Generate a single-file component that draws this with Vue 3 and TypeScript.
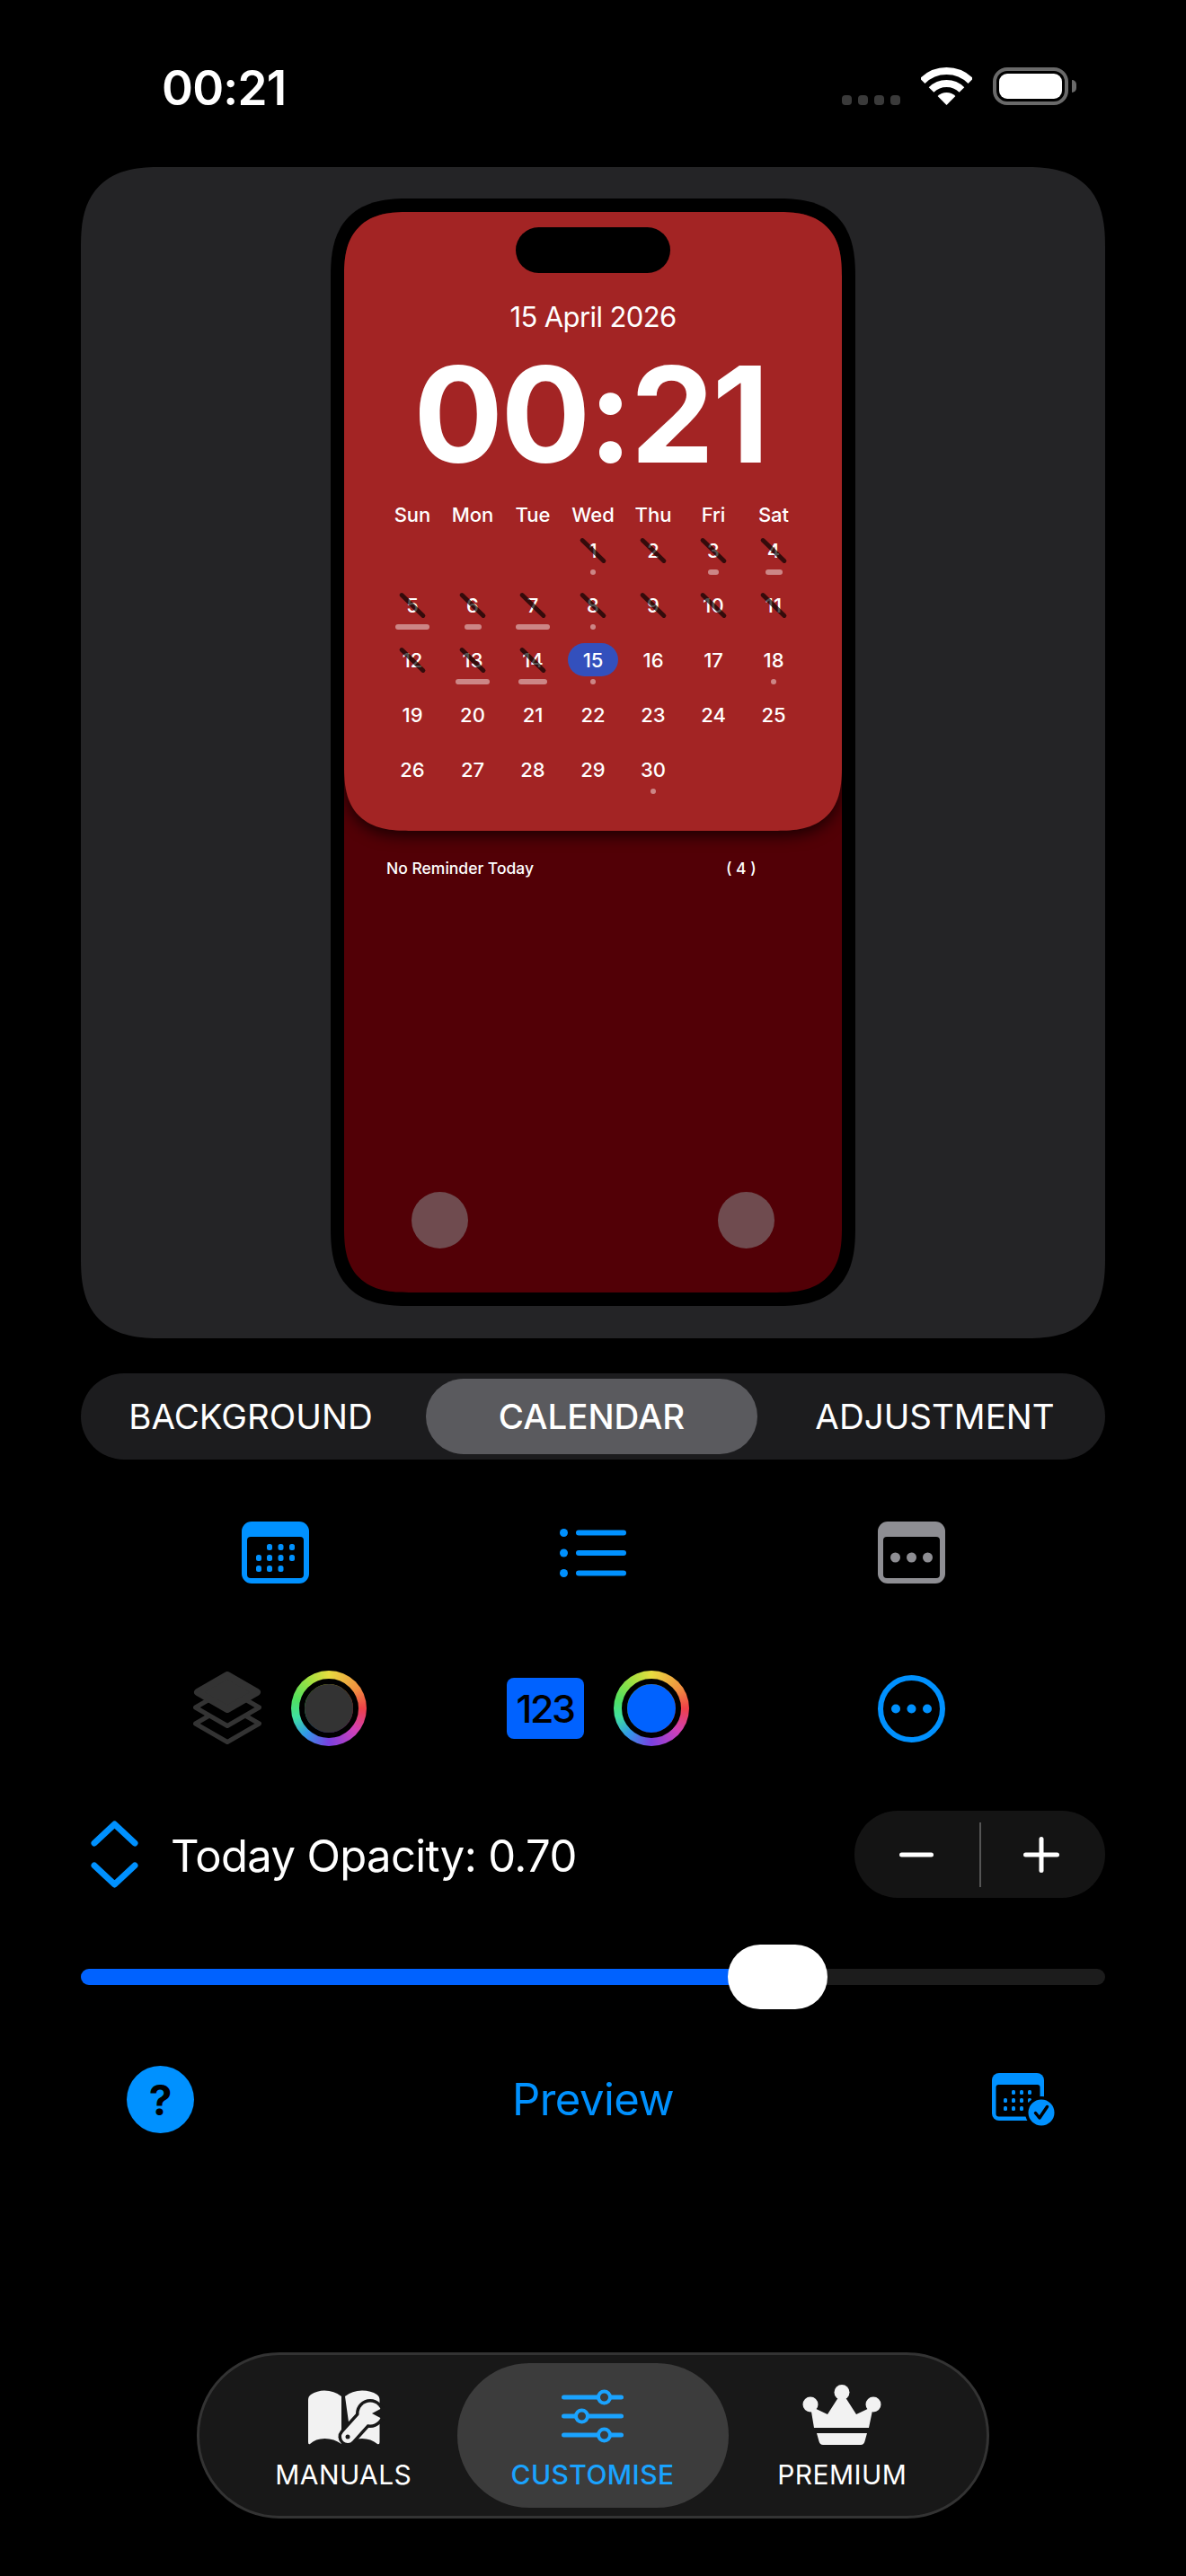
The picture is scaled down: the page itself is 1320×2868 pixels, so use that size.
<script setup lang="ts">
interface DayCell {
  day: number | null
  crossed?: boolean
  bar?: number
  today?: boolean
}

const weekdays = ['Sun', 'Mon', 'Tue', 'Wed', 'Thu', 'Fri', 'Sat']

// bar width per day, 6.5 reads as a dot
const bars: Record<number, number> = {
  1: 6.5, 3: 12, 4: 19, 5: 38, 6: 19, 7: 38, 8: 6.5,
  13: 38, 14: 32, 15: 6.5, 18: 6.5, 30: 6.5
}

const cells: DayCell[] = [
  { day: null }, { day: null }, { day: null },
  ...Array.from({ length: 30 }, (_, i) => ({
    day: i + 1,
    crossed: i + 1 < 15,
    today: i + 1 === 15,
    bar: bars[i + 1]
  }))
]

const opacity = 0.7
const trackWidth = 1140
const thumbWidth = 111
const thumbLeft = opacity * (trackWidth - thumbWidth)
const fillWidth = thumbLeft + thumbWidth / 2
</script>

<template>
  <div class="page">
    <!-- status bar -->
    <header class="status">
      <span class="status-time">00:21</span>
      <div class="status-right">
        <div class="signal"><i></i><i></i><i></i><i></i></div>
        <svg class="wifi" width="57" height="42" viewBox="0 0 57 42">
          <path d="M1.63 15.13A38 38 0 0 1 55.37 15.13" fill="none" stroke="#fff" stroke-width="8" />
          <path d="M11.53 25.03A24 24 0 0 1 45.47 25.03" fill="none" stroke="#fff" stroke-width="8" />
          <path d="M28.5 42L18.6 32.1A14 14 0 0 1 38.4 32.1Z" fill="#fff" />
        </svg>
        <div class="battery">
          <div class="battery-body"><div class="battery-level"></div></div>
          <div class="battery-nub"></div>
        </div>
      </div>
    </header>

    <!-- phone preview -->
    <section class="card">
      <div class="phone">
        <div class="screen">
          <div class="lock-panel">
            <div class="island"></div>
            <div class="date">15 April 2026</div>
            <div class="clock">00:21</div>
            <div class="week">
              <span v-for="d in weekdays" :key="d">{{ d }}</span>
            </div>
            <div class="days">
              <div v-for="(c, i) in cells" :key="i" class="cell">
                <template v-if="c.day">
                  <span class="num" :class="{ crossed: c.crossed, today: c.today }">{{ c.day }}</span>
                  <span v-if="c.bar" class="bar" :style="{ width: c.bar + 'px' }"></span>
                </template>
              </div>
            </div>
          </div>
          <div class="reminder">
            <span>No Reminder Today</span>
            <span>( 4 )</span>
          </div>
          <div class="lock-buttons">
            <div class="lock-btn"></div>
            <div class="lock-btn"></div>
          </div>
        </div>
      </div>
    </section>

    <!-- segment -->
    <nav class="segment">
      <div class="seg seg-left">BACKGROUND</div>
      <div class="seg seg-active">CALENDAR</div>
      <div class="seg seg-right">ADJUSTMENT</div>
    </nav>

    <!-- style row -->
    <div class="icon-row row-one">
      <div class="icon-cell">
        <svg width="75" height="69" viewBox="0 0 75 69">
          <rect width="75" height="69" rx="11" fill="#0091ff" />
          <rect x="6" y="17" width="63" height="46" rx="4" fill="#000" />
          <g fill="#0091ff">
            <rect x="28" y="25" width="6" height="7" rx="2.5" />
            <rect x="40.5" y="25" width="6" height="7" rx="2.5" />
            <rect x="53" y="25" width="6" height="7" rx="2.5" />
            <rect x="16" y="37" width="6" height="7" rx="2.5" />
            <rect x="28" y="37" width="6" height="7" rx="2.5" />
            <rect x="40.5" y="37" width="6" height="7" rx="2.5" />
            <rect x="53" y="37" width="6" height="7" rx="2.5" />
            <rect x="16" y="49" width="6" height="7" rx="2.5" />
            <rect x="28" y="49" width="6" height="7" rx="2.5" />
            <rect x="40.5" y="49" width="6" height="7" rx="2.5" />
          </g>
        </svg>
      </div>
      <div class="icon-cell">
        <svg width="74" height="54" viewBox="0 0 74 54">
          <g fill="#0091ff">
            <circle cx="4.5" cy="4.5" r="4.5" />
            <circle cx="4.5" cy="27" r="4.5" />
            <circle cx="4.5" cy="49.5" r="4.5" />
            <rect x="18" y="1.5" width="56" height="6" rx="3" />
            <rect x="18" y="24" width="56" height="6" rx="3" />
            <rect x="18" y="46.5" width="56" height="6" rx="3" />
          </g>
        </svg>
      </div>
      <div class="icon-cell">
        <svg width="75" height="69" viewBox="0 0 75 69">
          <rect width="75" height="69" rx="11" fill="#8e8e93" />
          <rect x="6" y="17" width="63" height="46" rx="4" fill="#000" />
          <g fill="#8e8e93">
            <circle cx="19.5" cy="40" r="5.5" />
            <circle cx="37.5" cy="40" r="5.5" />
            <circle cx="55.5" cy="40" r="5.5" />
          </g>
        </svg>
      </div>
    </div>

    <div class="icon-row row-two">
      <div class="icon-cell shifted">
        <svg width="76" height="82" viewBox="0 0 76 82">
          <g stroke-linejoin="round">
            <path d="M38 37.5L73.5 58L38 78.5L2.5 58Z" fill="none" stroke="#333" stroke-width="5" />
            <path d="M38 19.5L73.5 40L38 60.5L2.5 40Z" fill="#000" stroke="#333" stroke-width="5" />
            <path d="M38 4L71 23L38 42L5 23Z" fill="#333" stroke="#333" stroke-width="8" />
          </g>
        </svg>
        <div class="ring"><div class="ring-fill fill-dark"></div></div>
      </div>
      <div class="icon-cell shifted">
        <div class="num-badge">123</div>
        <div class="ring"><div class="ring-fill fill-blue"></div></div>
      </div>
      <div class="icon-cell">
        <svg width="75" height="75" viewBox="0 0 75 75">
          <circle cx="37.5" cy="37.5" r="34.5" fill="none" stroke="#0091ff" stroke-width="6" />
          <g fill="#0091ff">
            <circle cx="20" cy="37.5" r="5" />
            <circle cx="37.5" cy="37.5" r="5" />
            <circle cx="55" cy="37.5" r="5" />
          </g>
        </svg>
      </div>
    </div>

    <!-- opacity -->
    <div class="opacity-row">
      <div class="opacity-label">
        <svg width="53" height="75" viewBox="0 0 53 75">
          <g fill="none" stroke="#0091ff" stroke-width="7" stroke-linecap="round" stroke-linejoin="round">
            <path d="M4 25L26.5 4L49 25" />
            <path d="M4 50L26.5 71L49 50" />
          </g>
        </svg>
        <span class="opacity-text">Today Opacity: 0.70</span>
      </div>
      <div class="stepper">
        <svg width="38" height="40" viewBox="0 0 38 40">
          <rect y="17.5" width="38" height="5" rx="2.5" fill="#fff" />
        </svg>
        <div class="stepper-line"></div>
        <svg width="40" height="40" viewBox="0 0 40 40">
          <rect y="17.5" width="40" height="5" rx="2.5" fill="#fff" />
          <rect x="17.5" width="5" height="40" rx="2.5" fill="#fff" />
        </svg>
      </div>
    </div>

    <div class="slider">
      <div class="track">
        <div class="track-fill" :style="{ width: fillWidth + 'px' }"></div>
      </div>
      <div class="thumb" :style="{ left: thumbLeft + 'px' }"></div>
    </div>

    <!-- actions -->
    <div class="action-row">
      <div class="help">?</div>
      <div class="preview">Preview</div>
      <svg class="check-cal" width="71" height="59" viewBox="0 0 71 59">
        <rect width="58" height="53" rx="8" fill="#0091ff" />
        <rect x="4.5" y="13" width="49" height="35.5" rx="3" fill="#000" />
        <g fill="#0091ff">
          <rect x="22" y="19" width="4" height="5" rx="1.6" />
          <rect x="31" y="19" width="4" height="5" rx="1.6" />
          <rect x="40" y="19" width="4" height="5" rx="1.6" />
          <rect x="13" y="28" width="4" height="5" rx="1.6" />
          <rect x="22" y="28" width="4" height="5" rx="1.6" />
          <rect x="31" y="28" width="4" height="5" rx="1.6" />
          <rect x="40" y="28" width="4" height="5" rx="1.6" />
          <rect x="13" y="37" width="4" height="5" rx="1.6" />
          <rect x="22" y="37" width="4" height="5" rx="1.6" />
          <rect x="31" y="37" width="4" height="5" rx="1.6" />
        </g>
        <circle cx="55" cy="44" r="18" fill="#000" />
        <circle cx="55" cy="44" r="14.5" fill="#0091ff" />
        <path d="M48.5 44.5L53 50L61.5 37.5" fill="none" stroke="#000" stroke-width="3.5" stroke-linecap="round" stroke-linejoin="round" />
      </svg>
    </div>

    <!-- tab bar -->
    <nav class="tabbar">
      <div class="tab tab-left">
        <svg class="book" width="79" height="68" viewBox="0 -5 79 68">
          <path d="M0 12Q0 8 3 6Q10 1.5 18 1.5Q29 1.5 37 8V61Q29 55 18.5 55Q8 55 2 61Q0 62 0 59Z" fill="#f2f2f2" />
          <path d="M41 8Q49 1.5 60 1.5Q70 1.5 76.5 6Q79.5 8 79.5 12V59Q79.5 62 77 61Q70 55 60 55Q53 55 48 58Z" fill="#f2f2f2" />
          <path d="M44 53L62 33" stroke="#181818" stroke-width="21" stroke-linecap="round" />
          <circle cx="69" cy="27" r="16" fill="#181818" />
          <path d="M44 53L62 33" stroke="#f2f2f2" stroke-width="14" stroke-linecap="round" />
          <circle cx="69" cy="27" r="12.5" fill="#f2f2f2" />
          <path d="M71 27L86 19V35Z" fill="#181818" />
          <circle cx="44" cy="53" r="2.5" fill="#181818" />
        </svg>
        <span>MANUALS</span>
      </div>
      <div class="tab tab-active">
        <svg width="69" height="68" viewBox="0 -6 69 68">
          <g fill="#1aa3ff">
            <rect y="5.5" width="69" height="5" rx="2.5" />
            <rect y="26.5" width="69" height="5" rx="2.5" />
            <rect y="47.5" width="69" height="5" rx="2.5" />
          </g>
          <g fill="#3c3c3c" stroke="#1aa3ff" stroke-width="4">
            <circle cx="47.5" cy="8" r="6.5" />
            <circle cx="22.5" cy="29" r="6.5" />
            <circle cx="47.5" cy="50" r="6.5" />
          </g>
        </svg>
        <span>CUSTOMISE</span>
      </div>
      <div class="tab tab-right">
        <svg width="88" height="68" viewBox="0 0 88 68">
          <g fill="#f2f2f2">
            <circle cx="44" cy="8.5" r="8.5" />
            <circle cx="9" cy="22" r="8.5" />
            <circle cx="79" cy="22" r="8.5" />
            <path d="M13 48L9 24L28 33L44 8L60 33L79 24L74 48Z" />
            <path d="M16 54H72L69.5 63Q68.5 67 65 67H23Q19.5 67 18.5 63Z" />
          </g>
        </svg>
        <span>PREMIUM</span>
      </div>
    </nav>
  </div>
</template>

<style>
html,
body {
  margin: 0;
  background: #000;
}
</style>

<style scoped>
.page {
  box-sizing: border-box;
  width: 1320px;
  height: 2868px;
  padding: 75px 90px 0;
  display: flex;
  flex-direction: column;
  background: #000;
  color: #fff;
  font-family: Inter, "Liberation Sans", sans-serif;
  overflow: hidden;
}

/* status bar */
.status {
  display: flex;
  align-items: center;
  justify-content: space-between;
  height: 42px;
  margin: 0 32px 0 92px;
}

.status-time {
  font-size: 53px;
  font-weight: 600;
  line-height: 42px;
  letter-spacing: -0.8px;
  margin-left: -2px;
  padding-top: 4px;
}

.status-right {
  display: flex;
  align-items: flex-end;
}

.signal {
  display: flex;
  gap: 7px;
  margin-right: 23px;
}

.signal i {
  display: block;
  width: 11px;
  height: 11px;
  border-radius: 4px;
  background: #3a3a3a;
}

.wifi {
  display: block;
  margin-right: 23px;
}

.battery {
  display: flex;
  align-items: center;
}

.battery-body {
  box-sizing: border-box;
  width: 84px;
  height: 42px;
  padding: 3px;
  border: 4px solid #6a6a6a;
  border-radius: 16px;
}

.battery-level {
  height: 100%;
  border-radius: 9px;
  background: #fff;
}

.battery-nub {
  width: 5px;
  height: 14px;
  margin-left: 4px;
  border-radius: 0 5px 5px 0;
  background: #6a6a6a;
}

/* preview card */
.card {
  display: flex;
  justify-content: center;
  height: 1304px;
  margin-top: 69px;
  padding-top: 35px;
  box-sizing: border-box;
  border-radius: 76px;
  background: #242426;
}

.phone {
  box-sizing: border-box;
  width: 584px;
  height: 1233px;
  border: 15px solid #000;
  border-radius: 76px;
  background: #000;
}

.screen {
  display: flex;
  flex-direction: column;
  height: 100%;
  border-radius: 62px;
  background: #520006;
  overflow: hidden;
}

.lock-panel {
  display: flex;
  flex-direction: column;
  align-items: center;
  height: 689px;
  flex-shrink: 0;
  border-radius: 0 0 62px 62px;
  background: #a32424;
  box-shadow: 0 6px 16px rgba(0, 0, 0, 0.65);
}

/* ios style continuous corners where the browser has them */
@supports (corner-shape: superellipse(1.4)) {
  .card {
    border-radius: 90px;
    corner-shape: superellipse(1.4);
  }

  .phone {
    border-radius: 88px;
    corner-shape: superellipse(1.4);
  }

  .screen {
    border-radius: 72px;
    corner-shape: superellipse(1.4);
  }

  .lock-panel {
    border-radius: 0 0 72px 72px;
    corner-shape: superellipse(1.4);
  }
}

.island {
  width: 172px;
  height: 51px;
  margin-top: 17px;
  border-radius: 26px;
  background: #000;
}

.date {
  margin-top: 29px;
  font-size: 31px;
  line-height: 40px;
  letter-spacing: -0.6px;
}

.clock {
  margin-top: 28px;
  margin-right: 6px;
  font-size: 148px;
  font-weight: 700;
  line-height: 122px;
  letter-spacing: -2.5px;
}

.week {
  display: grid;
  grid-template-columns: repeat(7, 67px);
  margin-top: 35px;
  font-size: 22px;
  font-weight: 500;
  line-height: 30px;
  text-align: center;
}

.days {
  display: grid;
  grid-template-columns: repeat(7, 67px);
  grid-auto-rows: 61px;
  margin-top: 10px;
}

.cell {
  display: flex;
  flex-direction: column;
  align-items: center;
}

.num {
  position: relative;
  display: flex;
  align-items: center;
  justify-content: center;
  height: 30px;
  font-size: 22px;
  font-weight: 500;
}

.num.today {
  width: 56px;
  height: 37px;
  margin: -4px 0 -3px;
  border-radius: 19px;
  background: #3350bd;
}

.num.crossed::after {
  content: "";
  position: absolute;
  left: 50%;
  top: 50%;
  width: 38px;
  height: 5px;
  border-radius: 3px;
  background: rgba(0, 0, 0, 0.68);
  transform: translate(-50%, -50%) rotate(44deg);
}

.bar {
  height: 6px;
  margin-top: 6px;
  border-radius: 3px;
  background: rgba(255, 255, 255, 0.45);
}

.reminder {
  display: grid;
  grid-template-columns: 378px auto;
  margin-top: 27px;
  padding-left: 47px;
  font-size: 17.5px;
  font-weight: 500;
  line-height: 30px;
}

.lock-buttons {
  display: flex;
  justify-content: space-between;
  margin-top: auto;
  padding: 0 75px 49px;
}

.lock-btn {
  width: 63px;
  height: 63px;
  border-radius: 50%;
  background: #6f4b4f;
}

/* segment */
.segment {
  display: grid;
  grid-template-columns: 378px 369px 381px;
  box-sizing: border-box;
  height: 96px;
  margin-top: 39px;
  padding: 6px;
  border-radius: 48px;
  background: #1c1c1e;
  font-size: 38.5px;
}

.seg {
  display: flex;
  align-items: center;
  justify-content: center;
}

.seg-left {
  padding-right: 12px;
}

.seg-right {
  padding-left: 14px;
}

.seg-active {
  border-radius: 42px;
  background: #5a5a5e;
  font-weight: 500;
}

/* icon rows */
.icon-row {
  display: grid;
  grid-template-columns: repeat(3, 354px);
  margin-left: 39px;
}

.row-one {
  height: 69px;
  margin-top: 69px;
}

.row-two {
  height: 84px;
  margin-top: 97px;
}

.icon-cell {
  display: flex;
  align-items: center;
  justify-content: center;
  gap: 33px;
}

.icon-cell.shifted {
  padding-left: 10px;
}

.ring {
  display: flex;
  align-items: center;
  justify-content: center;
  width: 84px;
  height: 84px;
  border-radius: 50%;
  background: conic-gradient(#e8dc40, #f09040 55deg, #ef4048 90deg, #d040b8 130deg, #7a40e0 180deg, #3098e8 222deg, #40e0a0 255deg, #50e060 285deg, #a0e040 325deg, #e8dc40);
}

.ring-fill {
  width: 54px;
  height: 54px;
  border-radius: 50%;
  border: 6px solid #000;
  background-clip: padding-box;
}

.fill-dark {
  background-color: #333;
}

.fill-blue {
  background-color: #0062ff;
}

.num-badge {
  display: flex;
  align-items: center;
  justify-content: center;
  width: 86px;
  height: 68px;
  border-radius: 8px;
  background: #0062ff;
  color: #000;
  font-size: 43px;
  font-weight: 500;
  letter-spacing: -2.5px;
}

/* opacity */
.opacity-row {
  display: flex;
  align-items: center;
  justify-content: space-between;
  height: 97px;
  margin-top: 72px;
}

.opacity-label {
  display: flex;
  align-items: center;
  gap: 36px;
  margin-left: 11px;
  font-size: 49px;
}

.opacity-text {
  padding-top: 4px;
  letter-spacing: -0.65px;
}

.stepper {
  display: flex;
  align-items: center;
  box-sizing: border-box;
  width: 279px;
  height: 97px;
  padding-left: 50px;
  border-radius: 48px;
  background: #141414;
}

.stepper-line {
  width: 2px;
  height: 72px;
  margin: 0 47px 0 51px;
  background: #555;
}

.slider {
  position: relative;
  display: flex;
  align-items: center;
  height: 72px;
  margin-top: 52px;
}

.track {
  width: 100%;
  height: 18px;
  border-radius: 9px;
  background: #1c1c1c;
  overflow: hidden;
}

.track-fill {
  height: 100%;
  background: #0062ff;
}

.thumb {
  position: absolute;
  top: 0;
  width: 111px;
  height: 72px;
  border-radius: 36px;
  background: #fff;
}

/* actions */
.action-row {
  display: grid;
  grid-template-columns: 1fr auto 1fr;
  align-items: center;
  height: 75px;
  margin-top: 63px;
}

.help {
  display: flex;
  align-items: center;
  justify-content: center;
  width: 75px;
  height: 75px;
  margin-left: 51px;
  border-radius: 50%;
  background: #0091ff;
  color: #000;
  font-size: 46px;
  font-weight: 700;
}

.preview {
  color: #0091ff;
  font-size: 49px;
  letter-spacing: -0.5px;
}

.check-cal {
  justify-self: end;
  margin-right: 55px;
}

/* tab bar */
.tabbar {
  display: flex;
  align-self: center;
  box-sizing: border-box;
  width: 882px;
  height: 185px;
  margin-top: 244px;
  padding: 9px 0;
  border: 3px solid #333;
  border-radius: 92px;
  background: #181818;
  font-size: 30px;
  letter-spacing: 0.4px;
}

.tab {
  box-sizing: border-box;
  display: flex;
  flex-direction: column;
  align-items: center;
  padding-top: 24px;
}

.tab span {
  margin-top: 14px;
  line-height: 36px;
}

.book {
  overflow: visible;
}

.tab-left {
  width: 286.5px;
  padding-left: 34px;
}

.tab-right {
  width: 287.5px;
  padding-right: 34px;
}

.tab-active {
  width: 302px;
  border-radius: 80px;
  background: #3c3c3c;
  color: #1aa3ff;
  font-weight: 500;
}
</style>
